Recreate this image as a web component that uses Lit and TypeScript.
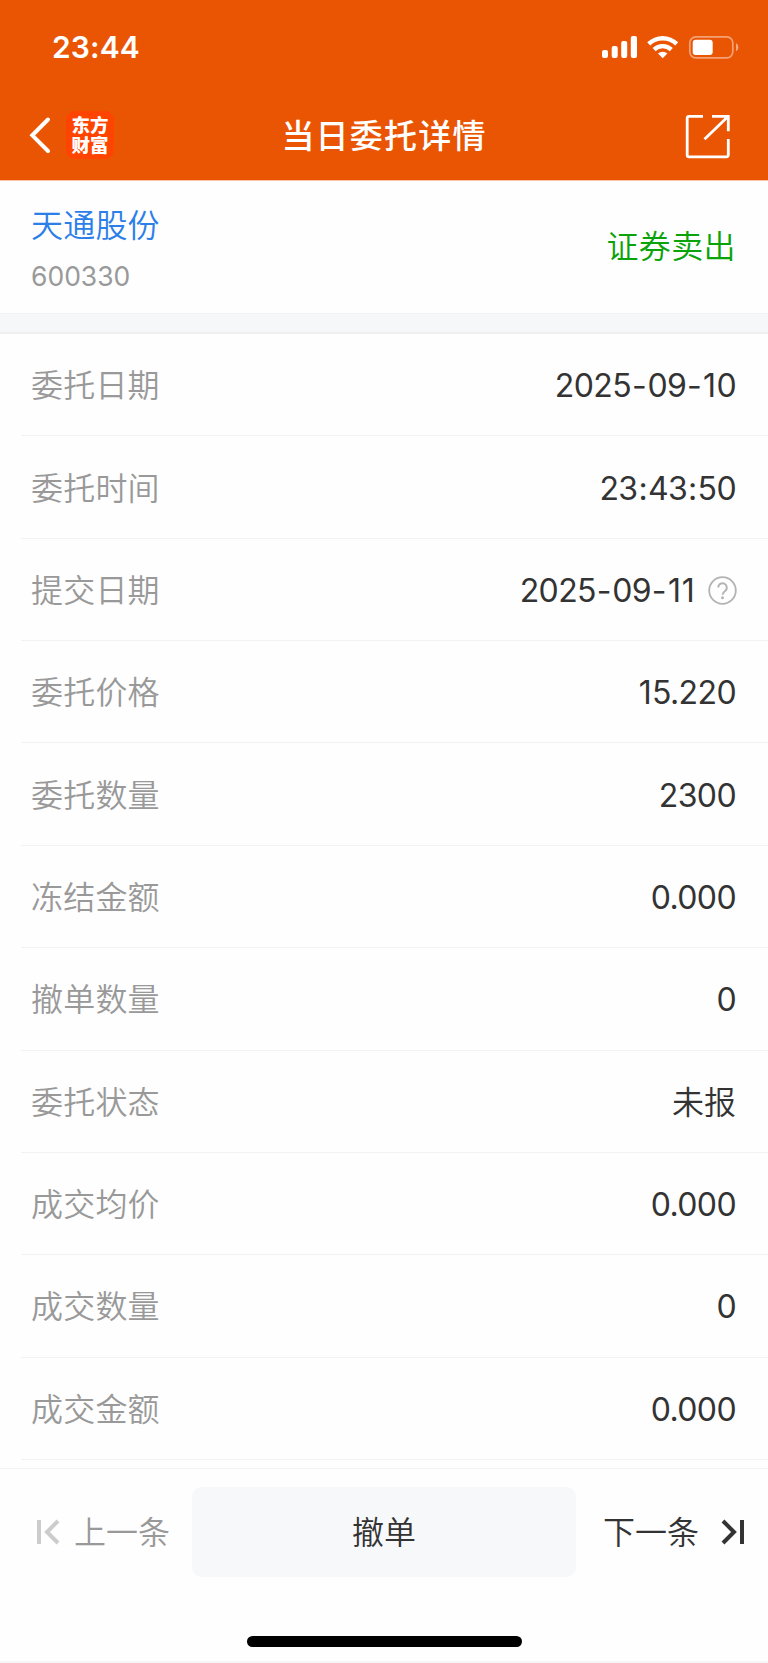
import { LitElement, html, css, svg } from "lit";
import { customElement } from "lit/decorators.js";

interface Field {
  label: string;
  value: string;
  help?: boolean;
}

const FIELDS: Field[] = [
  { label: "委托日期", value: "2025-09-10" },
  { label: "委托时间", value: "23:43:50" },
  { label: "提交日期", value: "2025-09-11", help: true },
  { label: "委托价格", value: "15.220" },
  { label: "委托数量", value: "2300" },
  { label: "冻结金额", value: "0.000" },
  { label: "撤单数量", value: "0" },
  { label: "委托状态", value: "未报" },
  { label: "成交均价", value: "0.000" },
  { label: "成交数量", value: "0" },
  { label: "成交金额", value: "0.000" },
];

@customElement("app-root")
export class AppRoot extends LitElement {
  static styles = css`
    :host {
      display: flex;
      flex-direction: column;
      width: 768px;
      height: 1663px;
      overflow: hidden;
      box-sizing: border-box;
      background: #fefefe;
      color: #333;
      font-family: Inter, "Noto Sans CJK SC", sans-serif;
      font-size: 32px;
      font-weight: 350;
      line-height: 1;
    }
    svg { display: block; flex: none; }
    .top {
      flex: none;
      height: 180px;
      background: #ea5504;
      border-bottom: 1px solid #fcc3a6;
      color: #fff;
    }
    .status {
      display: flex;
      justify-content: space-between;
      height: 94px;
      padding: 0 29px 0 52px;
      box-sizing: border-box;
      align-items: center;
    }
    .clock { font-size: 30px; font-weight: 580; letter-spacing: 0.1px; }
    .nav {
      display: grid;
      grid-template-columns: 200px 1fr 200px;
      align-items: center;
      height: 83px;
    }
    .left { display: flex; align-items: center; gap: 15px; padding: 0 0 2px 29px; }
    .logo {
      display: flex;
      flex-direction: column;
      align-items: center;
      justify-content: center;
      gap: 1.5px;
      width: 48px;
      height: 48px;
      border-radius: 9px;
      background: #ff4400;
      font-family: "Noto Sans CJK SC", sans-serif;
      font-size: 18.5px;
      line-height: 19px;
      font-weight: 900;
    }
    .title { text-align: center; font-size: 33px; letter-spacing: 1.2px; font-weight: 500; padding-top: 2px; }
    .right { display: flex; justify-content: flex-end; padding: 1px 38px 0 0; }
    .stock {
      flex: none;
      display: flex;
      justify-content: space-between;
      align-items: center;
      height: 132px;
      padding: 0 32px 0 31px;
      box-sizing: border-box;
    }
    .ident { display: flex; flex-direction: column; gap: 21px; padding-top: 6px; }
    .name { color: #2c7fe8; letter-spacing: 0.2px; }
    .code { color: #999; font-size: 26.5px; font-weight: 400; }
    .side { color: #0aa30a; letter-spacing: 0.4px; }
    .band {
      flex: none;
      height: 21px;
      box-sizing: border-box;
      background: #f6f7f9;
      border-top: 1px solid #f1f2f3;
      border-bottom: 2px solid #eeeff1;
    }
    .rows { flex: 1; overflow: hidden; padding-left: 20.5px; }
    .row {
      display: flex;
      justify-content: space-between;
      align-items: center;
      height: 102.36px;
      padding: 3px 31px 0 10.5px;
      box-sizing: border-box;
      border-bottom: 1px solid #f2f2f3;
    }
    .label { color: #999; letter-spacing: 0.2px; }
    .value { display: flex; align-items: center; gap: 12px; }
    .num { letter-spacing: -0.6px; font-weight: 400; padding-right: 1px; }
    .word { padding-right: 1px; }
    .dash { padding: 0 1.4px 0 0.8px; }
    .colon { padding: 0 0.9px; }
    .one { padding: 0 0.9px 0 0.5px; }
    .help { margin-bottom: 1px; }
    .bar {
      flex: none;
      height: 195px;
      box-sizing: border-box;
      border-top: 1px solid #f2f2f3;
      border-bottom: 2px solid #f6f6f7;
      display: flex;
      flex-direction: column;
      justify-content: space-between;
      align-items: center;
      padding: 18px 0 14px;
    }
    .actions {
      width: 100%;
      display: grid;
      grid-template-columns: 192px 384px 192px;
      height: 90px;
    }
    .step { display: flex; align-items: center; }
    .step span { padding-top: 2px; }
    .prev { color: #999; padding-left: 36px; gap: 14px; }
    .next { padding-left: 27px; gap: 22px; }
    .cancel {
      display: flex;
      align-items: center;
      justify-content: center;
      padding-top: 2px;
      box-sizing: border-box;
      border-radius: 10px;
      background: #f7f8fa;
    }
    .home { width: 275px; height: 11px; border-radius: 6px; background: #000; }
  `;

  private statusIcons() {
    return svg`<svg width="138" height="26" viewBox="601 34 138 26" fill="#fff">
      <rect x="602" y="50" width="6" height="8" rx="2"/>
      <rect x="611.7" y="46" width="6" height="12" rx="2"/>
      <rect x="621.2" y="41" width="6" height="17" rx="2"/>
      <rect x="630.8" y="36" width="6.2" height="22" rx="2"/>
      <path d="M647.2 42.3a22.4 22.4 0 0 1 31 0l-3 3.3a18 18 0 0 0-25 0z"/>
      <path d="M652.6 48a14.6 14.6 0 0 1 20.2 0l-3 3.2a10.2 10.2 0 0 0-14.2 0z"/>
      <path d="M658 53.5a7 7 0 0 1 9.4 0l-4.7 4.7z"/>
      <rect x="689.8" y="36.8" width="43" height="21" rx="6" fill="none" stroke="#fff" stroke-opacity=".45" stroke-width="1.7"/>
      <rect x="692.7" y="39.7" width="20" height="15.2" rx="3"/>
      <path d="M736 43.2v8c3-1.2 3-6.8 0-8z" fill-opacity=".5"/>
    </svg>`;
  }

  private number(value: string) {
    const kinds: Record<string, string> = { "-": "dash", ":": "colon", "1": "one" };
    return value
      .split(/([-:1])/)
      .map((part) => (kinds[part] ? html`<span class=${kinds[part]}>${part}</span>` : part));
  }

  render() {
    return html`
      <header class="top">
        <div class="status">
          <span class="clock">23:44</span>
          ${this.statusIcons()}
        </div>
        <div class="nav">
          <div class="left">
            <svg width="22" height="38" viewBox="0 0 22 38" fill="none" stroke="#fff" stroke-width="4" stroke-linejoin="miter" stroke-linecap="round">
              <path d="M19 3.5 3.3 19.3 19 35"/>
            </svg>
            <div class="logo"><span>东方</span><span>财富</span></div>
          </div>
          <div class="title">当日委托详情</div>
          <div class="right">
            <svg width="45" height="45" viewBox="685 114 45 45" fill="none" stroke="#fff" stroke-width="2.8">
              <path d="M703 116.3h-14a1.8 1.8 0 0 0-1.8 1.8v37a1.8 1.8 0 0 0 1.8 1.8h37.5a1.8 1.8 0 0 0 1.8-1.8v-16M712 116.3h16.3v15M728 116.6l-23.5 22.7"/>
            </svg>
          </div>
        </div>
      </header>
      <section class="stock">
        <div class="ident">
          <span class="name">天通股份</span>
          <span class="code">600330</span>
        </div>
        <span class="side">证券卖出</span>
      </section>
      <div class="band"></div>
      <main class="rows">
        ${FIELDS.map(
          (f) => html`<div class="row">
            <span class="label">${f.label}</span>
            <span class="value"
              >${/\d/.test(f.value)
                ? html`<span class="num">${this.number(f.value)}</span>`
                : html`<span class="word">${f.value}</span>`}${f.help
                ? html`<svg class="help" width="29" height="29" viewBox="0 0 29 29" fill="none" stroke="#b3b3b3" stroke-width="1.8">
                    <circle cx="14.5" cy="14.5" r="13.3" />
                    <path d="M10.2 11.6a4.3 4.3 0 1 1 7 3.3c-1.7 1.2-2.6 1.8-2.6 3.8" stroke-width="2" />
                    <circle cx="14.5" cy="21.8" r="1.5" fill="#b3b3b3" stroke="none" />
                  </svg>`
                : ""}</span
            >
          </div>`
        )}
      </main>
      <footer class="bar">
        <div class="actions">
          <div class="step prev">
            <svg width="24" height="26" viewBox="0 0 24 26" fill="none" stroke="#ccc" stroke-width="4">
              <path d="M3 1v24M22 2 11 13l11 11" />
            </svg>
            <span>上一条</span>
          </div>
          <div class="cancel">撤单</div>
          <div class="step next">
            <span>下一条</span>
            <svg width="24" height="26" viewBox="0 0 24 26" fill="none" stroke="#333" stroke-width="4">
              <path d="M21 1v24M2 2l11 11L2 24" />
            </svg>
          </div>
        </div>
        <div class="home"></div>
      </footer>
    `;
  }
}
